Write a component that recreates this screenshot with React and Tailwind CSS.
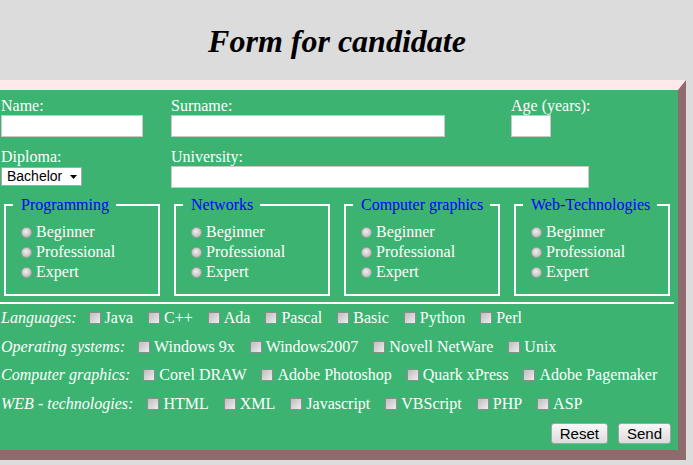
import React from "react";

const levels = ["Beginner", "Professional", "Expert"];
const areas = ["Programming", "Networks", "Computer graphics", "Web-Technologies"];

const skillRows = [
  { label: "Languages:", gap: "ml-[12px]", items: ["Java", "C++", "Ada", "Pascal", "Basic", "Python", "Perl"] },
  { label: "Operating systems:", gap: "ml-[13px]", items: ["Windows 9x", "Windows2007", "Novell NetWare", "Unix"] },
  { label: "Computer graphics:", gap: "ml-[13px]", items: ["Corel DRAW", "Adobe Photoshop", "Quark xPress", "Adobe Pagemaker"] },
  { label: "WEB - technologies:", gap: "ml-[14px]", items: ["HTML", "XML", "Javascript", "VBScript", "PHP", "ASP"] },
];

function Field({ label, className, children }) {
  return (
    <div className={className}>
      <div className="text-[16px] leading-[18px] text-white">{label}</div>
      {children}
    </div>
  );
}

function TextBox({ width, className = "" }) {
  return (
    <input
      type="text"
      className={`block h-[22px] bg-white border border-[#c8c8c8] outline-none ${width} ${className}`}
    />
  );
}

function LevelSet({ title }) {
  return (
    <fieldset className="w-[156px] border-2 border-white">
      <legend className="ml-[7px] pl-[8px] pr-[7px] text-[16px] leading-[18px] text-[#0000ff]">
        {title}
      </legend>
      {/* radio group */}
      <div className="pt-[8px] pb-[12px] pl-[15px]">
        {levels.map((lvl) => (
          <label key={lvl} className="flex items-center h-[20px] text-[16px] text-white">
            <input
              type="radio"
              name={title}
              className="appearance-none w-[11px] h-[11px] rounded-full border border-[#a0a0a0] bg-[radial-gradient(circle_at_45%_40%,#f0f0f0,#c8c8c8_60%,#a4a4a4)] mr-[4px]"
            />
            {lvl}
          </label>
        ))}
      </div>
    </fieldset>
  );
}

function SkillRow({ row }) {
  return (
    <div className="flex items-center h-[28.5px] pl-[1px] text-[16px] text-white whitespace-nowrap">
      <span className="italic">{row.label}</span>
      {row.items.map((item, i) => (
        <label key={item} className={`flex items-center ${i === 0 ? row.gap : "ml-[15px]"}`}>
          <input
            type="checkbox"
            className="appearance-none w-[12px] h-[12px] border border-[#8d8d8d] bg-gradient-to-br from-[#bdbdbd] to-[#eeeeee] mr-[4px]"
          />
          {item}
        </label>
      ))}
    </div>
  );
}

export default function App() {
  return (
    <div
      className="w-[693px] h-[465px] overflow-hidden bg-[#dcdcdc]"
      style={{ fontFamily: '"Liberation Serif", "Times New Roman", serif' }}
    >
      <div className="w-[674px] h-[80px] pt-[2px] flex items-center justify-center">
        <h1 className="text-[32px] leading-[37px] font-bold italic text-black">Form for candidate</h1>
      </div>

      <div className="w-[686px] h-[380px] bg-[#3cb371] border-t-[10px] border-r-[8px] border-b-[10px] border-t-[#ffe9ea] border-r-[#8f6b6e] border-b-[#8f6b6e]">
        <div className="h-full pt-[3px] pr-[3px]">
          <form className="h-full border-t border-r border-[#52a774]" onSubmit={(e) => e.preventDefault()}>
            {/* name row */}
            <div className="flex pt-[2.5px] pl-[1px]">
              <Field label="Name:" className="w-[170px]">
                <TextBox width="w-[142px]" className="mt-[0.5px]" />
              </Field>
              <Field label="Surname:" className="w-[340px]">
                <TextBox width="w-[274px]" className="mt-[0.5px]" />
              </Field>
              <Field label="Age (years):">
                <TextBox width="w-[40px]" className="mt-[0.5px]" />
              </Field>
            </div>

            {/* diploma row */}
            <div className="flex mt-[10.5px] pl-[1px]">
              <Field label="Diploma:" className="w-[170px]">
                <div className="relative w-[81px] h-[19px] mt-[1px]">
                  <select
                    defaultValue="Bachelor"
                    className="appearance-none block w-full h-full bg-white border border-[#a9a9a9] pl-[5px] py-0 text-[14px] leading-[17px] text-black outline-none"
                    style={{ fontFamily: '"Liberation Sans", Arial, sans-serif' }}
                  >
                    <option>Bachelor</option>
                    <option>Master</option>
                    <option>PhD</option>
                  </select>
                  <svg className="absolute right-[5px] top-[8px] pointer-events-none" width="7" height="4" viewBox="0 0 7 4">
                    <path d="M0 0h7L3.5 4z" fill="#000" />
                  </svg>
                </div>
              </Field>
              <Field label="University:">
                <TextBox width="w-[418px]" />
              </Field>
            </div>

            {/* level fieldsets */}
            <div className="flex gap-[14px] pl-[4px] mt-[8.5px]">
              {areas.map((a) => (
                <LevelSet key={a} title={a} />
              ))}
            </div>

            <div className="mt-[6px] h-[2px] bg-white" />

            {skillRows.map((row) => (
              <SkillRow key={row.label} row={row} />
            ))}

            <div
              className="flex justify-end gap-[10px] mt-[5px] pr-[3px]"
              style={{ fontFamily: '"Liberation Sans", Arial, sans-serif' }}
            >
              <button type="reset" className="h-[21px] px-[8px] border border-[#a3a3a3] rounded-[3px] bg-gradient-to-b from-[#f8f8f8] to-[#dcdcdc] text-[15px] leading-none text-black">
                Reset
              </button>
              <button type="submit" className="h-[21px] px-[8px] border border-[#a3a3a3] rounded-[3px] bg-gradient-to-b from-[#f8f8f8] to-[#dcdcdc] text-[15px] leading-none text-black">
                Send
              </button>
            </div>
          </form>
        </div>
      </div>
    </div>
  );
}
